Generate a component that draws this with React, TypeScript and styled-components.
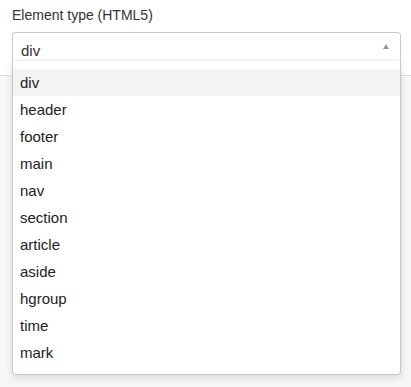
import React from 'react'
import styled, { createGlobalStyle } from 'styled-components'

const GlobalStyle = createGlobalStyle`
  html, body {
    margin: 0;
    padding: 0;
    background: #f7f7f7;
    font-family: 'Liberation Sans', Arial, Helvetica, sans-serif;
  }
`

const Page = styled.div`
  width: 411px;
  height: 387px;
  background: #f7f7f7;
  overflow: hidden;
`

const Panel = styled.div`
  height: 76px;
  box-sizing: border-box;
  background: #ffffff;
  border-bottom: 1px solid #dedede;
  padding: 5px 10px 0 12px;
`

const Label = styled.div`
  font-size: 14px;
  line-height: 20px;
  color: #333;
  margin-bottom: 7px;
`

const SelectWrap = styled.div`
  position: relative;
  width: 389px;
`

const Control = styled.div`
  box-sizing: border-box;
  height: 28px;
  border: 1px solid #c8c8c8;
  border-bottom: none;
  border-radius: 4px 4px 0 0;
  background: #fff;
  padding: 9px 8px 0 8px;
  display: flex;
  justify-content: space-between;
  font-size: 15px;
  line-height: 18px;
  color: #333;
`

const Arrow = styled.span`
  width: 0;
  height: 0;
  margin-top: 2px;
  margin-right: 3px;
  border-left: 3.5px solid transparent;
  border-right: 3.5px solid transparent;
  border-bottom: 5px solid #999;
`

const Menu = styled.ul`
  position: absolute;
  top: 28px;
  left: 0;
  right: 0;
  margin: 0;
  padding: 8px 0 8px;
  list-style: none;
  background: #fff;
  border: 1px solid #c8c8c8;
  border-top: 1px solid #f0f0f0;
  border-radius: 0 0 4px 4px;
  box-shadow: 0 3px 8px rgba(0, 0, 0, 0.12);
  z-index: 2;
`

const Option = styled.li<{ $active?: boolean }>`
  height: 27px;
  line-height: 27px;
  padding-left: 7px;
  font-size: 15px;
  color: #222;
  background: ${({ $active }) => ($active ? '#f3f3f3' : '#fff')};
`

const options = ['div', 'header', 'footer', 'main', 'nav', 'section', 'article', 'aside', 'hgroup', 'time', 'mark']

const App = () => {
  const selected = 'div'
  return (
    <Page>
      <GlobalStyle />
      <Panel>
        <Label>Element type (HTML5)</Label>
        <SelectWrap>
          <Control>
            <span>{selected}</span>
            <Arrow />
          </Control>
          <Menu>
            {options.map((opt) => (
              <Option key={opt} $active={opt === selected}>
                {opt}
              </Option>
            ))}
          </Menu>
        </SelectWrap>
      </Panel>
    </Page>
  )
}

export default App
